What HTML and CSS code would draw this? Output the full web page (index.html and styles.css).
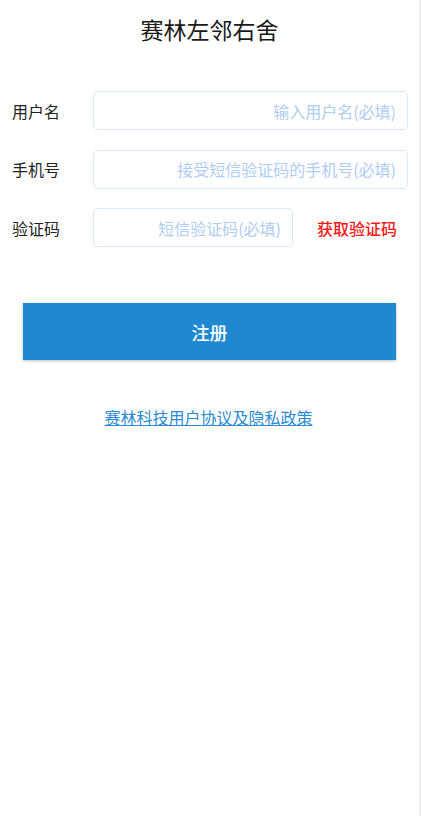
FILE: index.html
```html
<!DOCTYPE HTML>
<html>
	<head><title>注册</title>
		<meta name="viewport" content="width=device-width, initial-scale=1">
		<link rel="stylesheet" href="styles.css">
	</head>
	<body>
		<div class="page">
			<div class="title">赛林左邻右舍</div>

			<div class="form">
				<div class="row">
					<label class="label">用户名</label>
					<input class="field" type="text" placeholder="输入用户名(必填)">
				</div>
				<div class="row">
					<label class="label">手机号</label>
					<input class="field" type="tel" placeholder="接受短信验证码的手机号(必填)">
				</div>
				<div class="row">
					<label class="label">验证码</label>
					<input class="field field-code" type="text" placeholder="短信验证码(必填)">
					<a class="get-code">获取验证码</a>
				</div>
			</div>

			<button class="button">注册</button>

			<div class="agree">
				<a href="#">赛林科技用户协议及隐私政策</a>
			</div>
		</div>
	</body>
</html>
```

FILE: styles.css
```css
* {box-sizing: border-box;}

html, body {
	margin: 0;
	padding: 0;
	background: #fff;
}

body {
	font-family: "Noto Sans CJK SC", "Noto Sans", sans-serif;
	color: #222;
}

.page {
	width: 421px;
	min-height: 816px;
	border-right: 2px solid #f0f0f0;
}

.title {
	font-size: 23px;
	line-height: 32px;
	padding-top: 13px;
	text-align: center;
	color: #1a1a1a;
}

.form {
	margin-top: 46px;
	padding: 0 11px 0 12px;
}

.row {
	display: flex;
	align-items: center;
	height: 39px;
	margin-bottom: 19.5px;
}

.row:last-child {
	margin-bottom: 0;
}

.label {
	width: 81px;
	font-size: 16px;
	color: #222;
}

.field {
	flex: 1;
	height: 39px;
	border: 1px solid #d9e8fa;
	border-radius: 5px;
	padding: 0 11px;
	text-align: right;
	font-family: inherit;
	font-size: 16px;
	outline: none;
	background: #fff;
}

.field::placeholder {
	color: #aecdf3;
}

.field-code {
	flex: none;
	width: 200px;
}

.get-code {
	margin-left: 24px;
	font-size: 16px;
	font-weight: 500;
	color: #f41818;
	cursor: pointer;
}

.button {
	display: block;
	width: 373px;
	height: 57px;
	margin: 56px 0 0 23px;
	border: none;
	background-color: #1e89d0;
	color: #fff;
	font-family: inherit;
	font-size: 18px;
	font-weight: 500;
	box-shadow: 0 1px 3px rgba(0, 0, 0, 0.25);
	cursor: pointer;
}

.agree {
	margin-top: 45px;
	text-align: center;
	font-size: 16px;
	padding-right: 2px;
}

.agree a {
	color: #2b8bd3;
	text-decoration: underline;
}
```
